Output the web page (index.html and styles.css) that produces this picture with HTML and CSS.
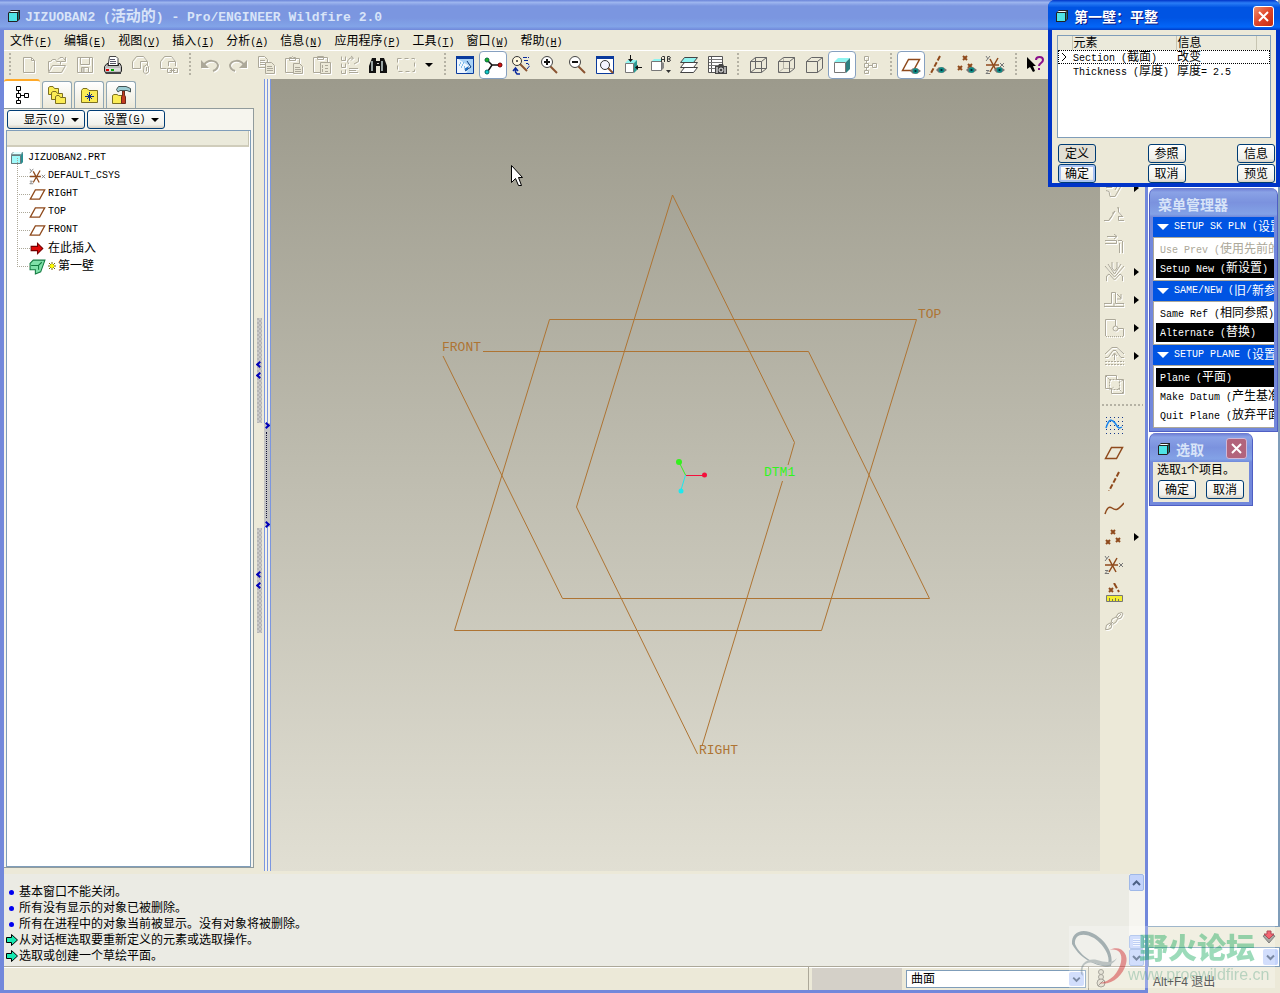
FILE: index.html
```html
<!DOCTYPE html>
<html lang="zh-CN">

<head>
  <meta charset="UTF-8">
  <meta name="viewport" content="width=device-width, initial-scale=1.0">
  <title>JIZUOBAN2 (活动的) - Pro/ENGINEER Wildfire 2.0</title>
  <link rel="stylesheet" href="styles.css">
</head>

<body>
  <!-- 图标库 -->
  <svg class="sprite" aria-hidden="true">
    <defs>
      <symbol id="i-part" viewBox="0 0 14 14">
        <path d="M1 4L4 1H13V10L10 13H1Z" fill="#222" />
        <path d="M2 4H10V12H2Z" fill="#4fe3e6" />
        <path d="M2 3L4 2H12L10 3Z" fill="#f4ffff" />
        <path d="M11 4L12 3V10L11 11Z" fill="#167a80" />
      </symbol>
      <symbol id="i-prt" viewBox="0 0 14 14">
        <path d="M1 3L3 1H13V11L11 13H1Z" fill="#7f9a9c" />
        <path d="M1.500 4.500H10.500V12.500H1.500Z" fill="#9ffafa" stroke="#687c7e" stroke-width="1" />
        <path d="M2 3L4 1H12L11 3Z" fill="#dff" />
        <path d="M11 4L13 2V11L11 13Z" fill="#2a8f92" />
      </symbol>
      <symbol id="i-new" viewBox="0 0 20 20">
        <path d="M4.500 2.500H12.500L15.500 5.500V17.500H4.500ZM12.500 2.500V5.500H15.500" class="ln" />
      </symbol>
      <symbol id="i-open" viewBox="0 0 20 20">
        <path d="M1.500 16.500V6.500H3.500L5.500 4.500H8.500L9.500 6.500H13.500V9.500M1.500 17.500L5.500 10.500H18.500L14.500 17.500ZM11 4.500L13 2.500H16L18 5M18.500 2V6.500H14" class="ln" />
      </symbol>
      <symbol id="i-save" viewBox="0 0 20 20">
        <path d="M2.500 2.500H17.500V17.500H2.500ZM5.500 2.500V9.500H14.500V2.500M6.500 17V12.500H13.500V17M8 13V17M9 13V17" class="ln" />
      </symbol>
      <symbol id="i-print" viewBox="0 0 20 20">
        <path d="M6.500 1.500H13L15 3.500V11H5Z" fill="#fff" stroke="#444" />
        <path d="M7 4.500H12M7 6.500H13M7 8.500H13" stroke="#556" />
        <path d="M1.500 11.500L4 8.500H5V10.500H15.500V8.500H17L18.500 11.500V16L17 18.500H3L1.500 16Z" fill="#bcbcbc" stroke="#222" />
        <path d="M3 13H17V16H3Z" fill="#ddd" />
        <path d="M3 14H6V16H3Z" fill="#d00" />
        <path d="M8 14H11V16H8Z" fill="#0a0" />
        <path d="M2 17H18V19H3Z" fill="#444" />
      </symbol>
      <symbol id="i-mail" viewBox="0 0 20 20">
        <path d="M1.500 13.500V6.500L5.500 1.500H12.500L16.500 6.500V10M1.500 13.500H9.500M9.500 13.500V6.500H16M13 10.500L12.500 17L14.500 19L17.500 17V11.500L15.500 9.500L13.500 11.500M15.500 12V16" class="ln" />
      </symbol>
      <symbol id="i-maillink" viewBox="0 0 20 20">
        <path d="M1.500 13.500V6.500L5.500 1.500H12.500L16.500 6.500V11M1.500 13.500H7.500M9.500 11V6.500H16M8.500 13.500H12.500V17.500H8.500ZM14.500 13.500H18.500V17.500H14.500ZM11 15.500H16" class="ln" />
      </symbol>
      <symbol id="i-undo" viewBox="0 0 20 20">
        <path d="M4 10C8 4 16 5 18 10C18 13 16 15 13 16" class="thick" />
        <path d="M1 5V13H9Z" class="fl" />
      </symbol>
      <symbol id="i-redo" viewBox="0 0 20 20">
        <path d="M16 10C12 4 4 5 2 10C2 13 4 15 7 16" class="thick" />
        <path d="M19 5V13H11Z" class="fl" />
      </symbol>
      <symbol id="i-copy" viewBox="0 0 20 20">
        <path d="M2.500 1.500H8.500L11.500 4.500V12.500H2.500ZM4 5.500H9M4 7.500H9M4 9.500H9" class="ln" />
        <path d="M9.500 7.500H15.500L18.500 10.500V18.500H9.500Z" class="ln pg" />
        <path d="M11 11.500H16M11 13.500H17M11 15.500H17" class="ln" />
      </symbol>
      <symbol id="i-paste" viewBox="0 0 20 20">
        <path d="M1.500 3.500H15.500V17.500H1.500ZM5.500 5.500V2.500H7.500L8.500 1.500L9.500 2.500H11.500V5.500Z" class="ln" />
        <path d="M9.500 8.500H15.500L18.500 11.500V18.500H9.500Z" class="ln pg" />
        <path d="M11 12.500H16M11 14.500H17M11 16.500H17" class="ln" />
      </symbol>
      <symbol id="i-pastesp" viewBox="0 0 20 20">
        <path d="M1.500 2.500H15.500V17.500H1.500ZM5.500 4.500V1.500H11.500V4.500Z" class="ln" />
        <path d="M8.500 7.500H18.500V18.500H8.500Z" class="ln pg" />
        <path d="M10.500 10V17M13 10.500H17M13 13.500H17M13 16.500H17" class="ln" stroke-dasharray="3 1" />
      </symbol>
      <symbol id="i-regen" viewBox="0 0 20 20">
        <path d="M1.500 1.500V5.500H5.500V1.500M1.500 8.500V12.500H5.500V8.500M1.500 15.500V18.500H5.500V14.500M9 13.500H18M9 15.500H16M9 17.500H18M8.500 9L7.500 6L10 3H13M11 1L13.500 3L11 5.500M18.500 2.500V6.500L14 9" class="ln" />
      </symbol>
      <symbol id="i-find" viewBox="0 0 20 20">
        <path d="M4 3H8V6H12V3H16L19 11V18H12V11H8V18H1V11Z" fill="#111" />
        <path d="M4 6V16M14 6V16" stroke="#9aa6a6" stroke-width="2" />
        <path d="M9 8.500H11" stroke="#ccc" />
      </symbol>
      <symbol id="i-box" viewBox="0 0 20 20">
        <path d="M1.500 3.500H18.500V16.500H1.500Z" class="ln" stroke-dasharray="4 3" />
      </symbol>
      <symbol id="i-repaint" viewBox="0 0 20 20">
        <path d="M1.500 1.500H18.500V18.500H1.500Z" fill="#eef6ff" stroke="#0a3a9c" />
        <path d="M1 1H19V4H1Z" fill="#0a3a9c" />
        <path d="M3 4H18V18H11L16 12Z" fill="#a9d2f6" />
        <path d="M5 8H10M4 10H9M6 12H11" stroke="#1a86d8" stroke-dasharray="1 2" />
        <path d="M12 6L16 12L10 16" fill="none" stroke="#0a3a7c" />
        <path d="M9 14L14 11L12 16Z" fill="#1a6ac0" />
      </symbol>
      <symbol id="i-spin" viewBox="0 0 20 20">
        <path d="M4 5L9 10H18M9 10L5 16" stroke="#111" stroke-width="1.500" fill="none" />
        <circle cx="4" cy="5" r="2" fill="#1bb51b" stroke="#064" />
        <circle cx="17" cy="10" r="2" fill="#d81010" stroke="#600" />
        <circle cx="4" cy="17" r="2" fill="#1cc" stroke="#066" />
      </symbol>
      <symbol id="i-orient" viewBox="0 0 20 20">
        <path d="M9 9L16 16" stroke="#8a5230" stroke-width="2" />
        <circle cx="6" cy="6" r="4.500" fill="#fff8e0" stroke="#333" />
        <path d="M5 6H7M6 5V7" stroke="#333" />
        <path d="M12 2.500H18M13 5.500H18M15 8.500H17L18.500 11L16 14" stroke="#0a2a9c" stroke-dasharray="4 1" fill="none" />
        <path d="M9 19H6L4.500 17V14M2 16L4.500 13L7 16" stroke="#0a2a9c" stroke-width="1.500" fill="none" />
      </symbol>
      <symbol id="i-zoomin" viewBox="0 0 20 20">
        <path d="M11 11L18 18" stroke="#8a5230" stroke-width="2" />
        <circle cx="8" cy="7" r="5.500" fill="#fff" stroke="#444" />
        <path d="M5 7H11M8 4V10" stroke="#111" stroke-width="2" />
      </symbol>
      <symbol id="i-zoomout" viewBox="0 0 20 20">
        <path d="M11 11L18 18" stroke="#8a5230" stroke-width="2" />
        <circle cx="8" cy="7" r="5.500" fill="#fff" stroke="#444" />
        <path d="M5 7H11" stroke="#111" stroke-width="2" />
      </symbol>
      <symbol id="i-refit" viewBox="0 0 20 20">
        <path d="M1.500 1.500H18.500V18.500H1.500Z" fill="#fff" stroke="#0a3a9c" />
        <path d="M1 1H19V4H1Z" fill="#0a3a9c" />
        <path d="M13 13L18 18" stroke="#8a5230" stroke-width="2" />
        <circle cx="10" cy="10" r="4.500" fill="#f4f4ff" stroke="#333" />
      </symbol>
      <symbol id="i-reorient" viewBox="0 0 20 20">
        <path d="M2.500 8.500H10.500V17.500H2.500Z" fill="#fff" stroke="#777" />
        <path d="M2 8L5 5H14L11 8Z" fill="#8ff4f0" />
        <path d="M11 8L14 5V15L11 18Z" fill="#2a9a94" />
        <path d="M7.500 0V5M19 12.500H14" stroke="#111" />
        <path d="M5 4H10L7.500 7ZM15 10V15L12 12.500Z" fill="#111" />
      </symbol>
      <symbol id="i-views" viewBox="0 0 20 20">
        <path d="M.5 6.500H10.500V15.500H.5Z" fill="#fff" stroke="#777" />
        <path d="M1 6L3 4H10V6Z" fill="#8ff4f0" />
        <path d="M11 7L13 8V13L11 15Z" fill="#888" />
        <path d="M10.500 7V2.500L11.500 1.500H13.500V7M10.500 4.500H13.500M16.500 1.500H18.500L19.500 3L18 4H16.500ZM16.500 4V6.500H18.500L19.500 5L18 4" stroke="#333" fill="none" />
        <path d="M15 15H20L17.500 18Z" fill="#333" />
      </symbol>
      <symbol id="i-layers" viewBox="0 0 20 20">
        <path d="M1.500 17.500L5.500 12.500H18.500L14.500 17.500Z" fill="#fff" stroke="#444" />
        <path d="M1.500 12.500L5.500 7.500H18.500L14.500 12.500Z" fill="#fff" stroke="#444" />
        <path d="M1.500 7.500L5.500 2.500H18.500L14.500 7.500Z" fill="#8ff4f0" stroke="#444" />
      </symbol>
      <symbol id="i-viewmgr" viewBox="0 0 20 20">
        <path d="M1.500 1.500H15.500V17.500H1.500ZM4.500 2V17" fill="#fff" stroke="#555" />
        <path d="M2 4.500H15M2 7.500H15M2 10.500H15M2 13.500H15" stroke="#777" />
        <path d="M8 11H11L12 9H16L17 11H20V19H8Z" fill="#444" />
        <path d="M9 12H11V18H9ZM17 12H19V18H17Z" fill="#aaa" />
        <circle cx="14" cy="15" r="2" fill="#444" stroke="#eee" />
      </symbol>
      <symbol id="i-wire" viewBox="0 0 20 20">
        <path d="M2.500 6.500H13.500V17.500H2.500ZM2.500 6.500L7.500 2.500H18.500L13.500 6.500M18.500 2.500V13.500L13.500 17.500M7.500 2.500V13.500H18.500M7.500 13.500L2.500 17.500" class="cube" />
      </symbol>
      <symbol id="i-hidden" viewBox="0 0 20 20">
        <path d="M7.500 3V13.500H18M7.500 13.500L3 17" class="cube dim" />
        <path d="M2.500 6.500H13.500V17.500H2.500ZM2.500 6.500L7.500 2.500H18.500L13.500 6.500M18.500 2.500V13.500L13.500 17.500" class="cube" />
      </symbol>
      <symbol id="i-nohidden" viewBox="0 0 20 20">
        <path d="M2.500 6.500H13.500V17.500H2.500ZM2.500 6.500L7.500 2.500H18.500L13.500 6.500M18.500 2.500V13.500L13.500 17.500" class="cube" />
      </symbol>
      <symbol id="i-shade" viewBox="0 0 20 20">
        <path d="M2 7L6 3H18L14 7Z" fill="#8ff4f0" />
        <path d="M14 7L18 3V14L14 18Z" fill="#2d8080" />
        <path d="M2.500 7.500H13.500V17.500H2.500Z" fill="#fff" stroke="#777" />
      </symbol>
      <symbol id="i-tree" viewBox="0 0 20 20">
        <path d="M4.500 1.500H8.500V5.500H4.500ZM4.500 8.500H8.500V12.500H4.500ZM4.500 15.500H8.500V18.500H4.500ZM12.500 8.500H16.500V12.500H12.500ZM6.500 5.500V8.500M6.500 12.500V15.500M8.500 10.500H12.500" class="ln" />
      </symbol>
      <symbol id="i-eye" viewBox="0 0 12 8">
        <path d="M0 4L3 1H8L12 4L8 7H3Z" fill="#777" />
        <circle cx="6" cy="4" r="3" fill="#0c8c84" />
        <path d="M5 3H7V5H5Z" fill="#023" />
      </symbol>
      <symbol id="i-plane" viewBox="0 0 20 20">
        <path d="M1.500 15.500L7.500 4.500H18.500L12.500 15.500Z" class="datum" />
      </symbol>
      <symbol id="i-axis" viewBox="0 0 20 20">
        <path d="M15 1L5 20" class="datum bold" stroke-dasharray="5 2" />
      </symbol>
      <symbol id="i-curve" viewBox="0 0 20 20">
        <path d="M1 15C3 9 5 7 8 9C12 12 14 11 20 4" class="datum" />
      </symbol>
      <symbol id="i-points" viewBox="0 0 20 20">
        <path d="M7 3L11 7M11 3L7 7M2 13L6 17M6 13L2 17M12 11L16 15M16 11L12 15" class="datum bold" />
      </symbol>
      <symbol id="i-csys" viewBox="0 0 20 20">
        <path d="M1 10H14M5 4L12 17M13 3L5 17" class="datum" />
        <path d="M1 1L3 4M5 1L1 6M15 8L19 12M19 8L15 12M1 15.500H4L1 18.500H5" stroke="#777" fill="none" />
      </symbol>
      <symbol id="i-help" viewBox="0 0 20 20">
        <path d="M1 2L10 11H7L9 16L7 17L4 12L1 14Z" fill="#000" />
        <path d="M10 5C10 1 17 1 17 5C17 8 13 8 13 11M13 13V15" stroke="#8a0f8a" stroke-width="2" fill="none" />
      </symbol>
      <symbol id="i-sketch" viewBox="0 0 20 20">
        <path d="M2 2.500H19M2 6.500H19M2 10.500H19M2 14.500H19M2 18.500H19" stroke="#16398c" stroke-dasharray="1 3" />
        <path d="M2 13C5 3 8 4 11 8C14 13 15 14 18 12" stroke="#1a86ee" fill="none" stroke-width="1.500" />
      </symbol>
      <symbol id="i-analysis" viewBox="0 0 20 20">
        <path d="M5 5L9 9M9 5L5 9M10 0L15 9" class="datum bold" stroke-dasharray="6 2" />
        <path d="M2.500 12.500H18.500V18.500H2.500Z" fill="#f3ee2c" stroke="#777" />
        <path d="M5.500 18V15M8.500 18V16M11.500 18V15M14.500 18V16" stroke="#775" />
      </symbol>
      <symbol id="i-link" viewBox="0 0 20 20">
        <path d="M1.500 18.500L2.500 14L6 12L8 13L7 17L4 18.500ZM7 12L8 8L12 6L14 7L12 11L9 13M12 6L14 2.500L18 1.500L19 3L17 7L14 8M5 15L9 11M13 7L17 3" class="ln" />
      </symbol>
      <symbol id="i-s1" viewBox="0 0 20 20">
        <path d="M2 9.500H8M2 12.500L5 13.500L6 18.500H11L18.500 5.500V1M8 9L12 1M11 12L15 5" class="ln" />
      </symbol>
      <symbol id="i-s2" viewBox="0 0 20 20">
        <path d="M0 14.500H5L11 5L8 7.500M13 2L14.500 1.500V6L19 11M14.500 10V14.500H20M14 10.500H19M5 14L8 10" class="ln" />
      </symbol>
      <symbol id="i-s3" viewBox="0 0 20 20">
        <path d="M3 2.500H13M10 0L13 2.500L10 5M1 6.500H12.500V9.500H1M15.500 9V19M18.500 7V19M14 6.500H18" class="ln" />
      </symbol>
      <symbol id="i-s4" viewBox="0 0 20 20">
        <path d="M2.500 19V14L5 12L10.500 18L16 12L18.500 14V19M1 4L10.500 15L20 4M4 2L10.500 12L17 2M8 0V6L10.500 9L13 6V0" class="ln" />
      </symbol>
      <symbol id="i-s5" viewBox="0 0 20 20">
        <path d="M0 13.500H7.500V2.500H11.500V13.500H20V16.500H0ZM10 16V13M13 4L17 8M17 4V9H13" class="ln" />
      </symbol>
      <symbol id="i-s6" viewBox="0 0 20 20">
        <path d="M1.500 18V1.500H11.500V8M14 10.500H19.500V18" class="ln" />
        <circle cx="11.500" cy="10.500" r="2.500" class="ln" />
        <path d="M2 18.500H20" class="ln" stroke-dasharray="1 1" />
      </symbol>
      <symbol id="i-s7" viewBox="0 0 20 20">
        <path d="M1 11.500H4L9 4.500H12L17 11.500H20M1 8L8 1.500H13L20 8M10.500 8V14M8 10L10.500 7L13 10" class="ln" />
        <path d="M1 15.500H20M1 18.500H20" class="ln" stroke-dasharray="2 1" />
      </symbol>
      <symbol id="i-s8" viewBox="0 0 20 20">
        <path d="M1.500 1.500H12.500V5.500H19.500V19.500H7.500V14.500H1.500Z" class="ln" />
        <path d="M2 2L7 7M19 6L14 9M7 15L10 13M19 19L14 14M5.500 5.500H15.500V15.500H5.500Z" class="ln" stroke-dasharray="2 1" />
      </symbol>
    </defs>
  </svg>

  <main class="app">
    <header class="titlebar">
      <svg class="ico14"><use href="#i-part" /></svg>
      <h1>JIZUOBAN2 (<span class="zh">活动的</span>) - Pro/ENGINEER Wildfire 2.0</h1>
    </header>

    <nav class="menubar">
      <button>文件<span class="en">(<u>F</u>)</span></button>
      <button>编辑<span class="en">(<u>E</u>)</span></button>
      <button>视图<span class="en">(<u>V</u>)</span></button>
      <button>插入<span class="en">(<u>I</u>)</span></button>
      <button>分析<span class="en">(<u>A</u>)</span></button>
      <button>信息<span class="en">(<u>N</u>)</span></button>
      <button>应用程序<span class="en">(<u>P</u>)</span></button>
      <button>工具<span class="en">(<u>T</u>)</span></button>
      <button>窗口<span class="en">(<u>W</u>)</span></button>
      <button>帮助<span class="en">(<u>H</u>)</span></button>
    </nav>

    <div class="toolbar">
      <i class="grip"></i>
      <button class="tool off" aria-label="新建"><svg><use href="#i-new" /></svg></button>
      <button class="tool off" aria-label="打开"><svg><use href="#i-open" /></svg></button>
      <button class="tool off" aria-label="保存"><svg><use href="#i-save" /></svg></button>
      <button class="tool" aria-label="打印"><svg><use href="#i-print" /></svg></button>
      <button class="tool off" aria-label="邮件"><svg><use href="#i-mail" /></svg></button>
      <button class="tool off" aria-label="邮件链接"><svg><use href="#i-maillink" /></svg></button>
      <i class="grip"></i>
      <button class="tool off" aria-label="撤消"><svg><use href="#i-undo" /></svg></button>
      <button class="tool off" aria-label="重做"><svg><use href="#i-redo" /></svg></button>
      <button class="tool off" aria-label="复制"><svg><use href="#i-copy" /></svg></button>
      <button class="tool off" aria-label="粘贴"><svg><use href="#i-paste" /></svg></button>
      <button class="tool off" aria-label="选择性粘贴"><svg><use href="#i-pastesp" /></svg></button>
      <button class="tool off" aria-label="再生"><svg><use href="#i-regen" /></svg></button>
      <button class="tool" aria-label="查找"><svg><use href="#i-find" /></svg></button>
      <button class="tool off" aria-label="框选"><svg><use href="#i-box" /></svg></button>
      <button class="drop" aria-label="选择方式"><i class="caret"></i></button>
      <i class="grip"></i>
      <button class="tool" aria-label="重画"><svg><use href="#i-repaint" /></svg></button>
      <button class="tool on" aria-label="旋转中心"><svg><use href="#i-spin" /></svg></button>
      <button class="tool" aria-label="定向模式"><svg><use href="#i-orient" /></svg></button>
      <button class="tool" aria-label="放大"><svg><use href="#i-zoomin" /></svg></button>
      <button class="tool" aria-label="缩小"><svg><use href="#i-zoomout" /></svg></button>
      <button class="tool" aria-label="重新调整"><svg><use href="#i-refit" /></svg></button>
      <button class="tool" aria-label="重定向"><svg><use href="#i-reorient" /></svg></button>
      <button class="tool" aria-label="视图列表"><svg><use href="#i-views" /></svg></button>
      <button class="tool" aria-label="层"><svg><use href="#i-layers" /></svg></button>
      <button class="tool" aria-label="视图管理器"><svg><use href="#i-viewmgr" /></svg></button>
      <i class="grip"></i>
      <button class="tool" aria-label="线框"><svg><use href="#i-wire" /></svg></button>
      <button class="tool" aria-label="隐藏线"><svg><use href="#i-hidden" /></svg></button>
      <button class="tool" aria-label="无隐藏线"><svg><use href="#i-nohidden" /></svg></button>
      <button class="tool on" aria-label="着色"><svg><use href="#i-shade" /></svg></button>
      <button class="tool off" aria-label="模型树"><svg><use href="#i-tree" /></svg></button>
      <i class="grip"></i>
      <button class="tool on" aria-label="显示平面"><svg><use href="#i-plane" /><use href="#i-eye" x="9" y="12" width="11" height="8" /></svg></button>
      <button class="tool" aria-label="显示轴"><svg><use href="#i-axis" x="-4" /><use href="#i-eye" x="7" y="11" width="11" height="8" /></svg></button>
      <button class="tool" aria-label="显示点"><svg><use href="#i-points" x="-1" y="-2" /><use href="#i-eye" x="9" y="11" width="11" height="8" /></svg></button>
      <button class="tool" aria-label="显示坐标系"><svg><use href="#i-csys" /><use href="#i-eye" x="9" y="11" width="11" height="8" /></svg></button>
      <i class="grip"></i>
      <button class="tool" aria-label="帮助"><svg><use href="#i-help" /></svg></button>
    </div>

    <div class="work">
      <aside class="navigator">
        <div class="tabs">
          <button class="tab active" aria-label="模型树"><svg><use href="#i-tree" /></svg></button>
          <button class="tab" aria-label="文件夹">
            <svg viewBox="0 0 20 20">
              <path d="M1.500 9.500V2.500L3 1.500H6L7.500 3.500H11.500V9.500Z" class="folder" />
              <path d="M4.500 14.500V7.500L6 6.500H9L10.500 8.500H15.500V14.500Z" class="folder" />
              <path d="M8.500 18.500V11.500L10 10.500H12L13.500 12.500H18.500V18.500Z" class="folder" />
            </svg>
          </button>
          <button class="tab" aria-label="收藏夹">
            <svg viewBox="0 0 20 20">
              <path d="M2.500 17.500V5.500L4 3.500H8L10 5.500H18.500V17.500Z" class="folder" />
              <path d="M6 11.500H15M10.500 7V16M8 9L13 14M13 9L8 14" stroke="#0a2a8c" />
            </svg>
          </button>
          <button class="tab" aria-label="连接">
            <svg viewBox="0 0 20 20">
              <path d="M1.500 18.500V10.500L3 9.500H6L7.500 10.500H11.500V18.500Z" class="folder" />
              <path d="M11.500 6V10L10.500 12V18.500H14.500V12L13.500 10V6Z" fill="#c43b22" stroke="#6a2a18" />
              <path d="M5.500 4.500L7.500 1.500H15L19.500 3.500V7L16 5.500H9L7 7Z" fill="#9ccdd4" stroke="#455" />
            </svg>
          </button>
        </div>
        <div class="panel">
          <div class="panel-btns">
            <button class="btn">显示<span class="en">(<u>O</u>)</span><i class="caret"></i></button>
            <button class="btn">设置<span class="en">(<u>G</u>)</span><i class="caret"></i></button>
          </div>
          <div class="treebox">
            <div class="treehead"></div>
            <ul class="tree">
              <li class="root"><svg class="ico14"><use href="#i-prt" /></svg><span class="en">JIZUOBAN2.PRT</span></li>
              <li><svg><use href="#i-csys" /></svg><span class="en">DEFAULT_CSYS</span></li>
              <li><svg><use href="#i-plane" /></svg><span class="en">RIGHT</span></li>
              <li><svg><use href="#i-plane" /></svg><span class="en">TOP</span></li>
              <li><svg><use href="#i-plane" /></svg><span class="en">FRONT</span></li>
              <li>
                <svg viewBox="0 0 16 16"><path d="M2 6H8V3L13 8L8 13V10H2Z" fill="#e00808" stroke="#700" stroke-width="1" /></svg>
                <span>在此插入</span>
              </li>
              <li>
                <svg viewBox="0 0 16 16"><path d="M1 5L4 2H15L11 13L6 15V11H1Z" fill="#7fe0a8" stroke="#127a40" /><path d="M2 7H9V11M9 7L12 4" stroke="#127a40" fill="none" /></svg>
                <svg class="spark" viewBox="0 0 8 8"><path d="M0 4H8M4 0V8M1 1L7 7M7 1L1 7" stroke="#776b00" /><circle cx="4" cy="4" r="2" fill="#ff0" /></svg>
                <span>第一壁</span>
              </li>
            </ul>
          </div>
        </div>
      </aside>

      <div class="splitter">
        <div class="hatch-col">
          <i class="hatch"><b></b><b></b></i>
          <i class="hatch"><b></b><b></b></i>
        </div>
        <div class="rail">
          <i class="handle"><b></b><em></em><b></b></i>
        </div>
      </div>

      <section class="viewport">
        <svg class="scene" width="829" height="792" viewBox="271 79 829 792">
          <g class="planes">
            <path d="M483 351.500H808.500L929.500 598.500H562.500L443 356" />
            <path d="M549.500 319.500H916.500L821.500 630.500H454.500Z" />
            <path d="M672.500 195L794.500 442.500L788 465M782.500 481L702 746M697.500 754L576.500 507L672.500 195" />
          </g>
          <g class="labels">
            <text x="442" y="351">FRONT</text>
            <text x="918" y="318">TOP</text>
            <text x="699" y="754">RIGHT</text>
            <text x="764" y="476" class="active">DTM1</text>
          </g>
          <path d="M686 475.500H704" stroke="#f5103c" />
          <path d="M685.500 475L679 462" stroke="#35f01e" />
          <path d="M685.500 475L681 490" stroke="#1ee8ee" />
          <circle cx="704.500" cy="475" r="2.500" fill="#f5103c" />
          <circle cx="679" cy="462" r="3" fill="#35f01e" />
          <circle cx="681" cy="491" r="2.500" fill="#1ee8ee" />
          <path d="M511.500 165.500V182.500L515.500 178.500L518.500 185.500H521.500L518.500 177.500H522.500Z" fill="#fff" stroke="#000" />
        </svg>
      </section>

      <div class="sidebar">
        <button class="tool off" aria-label="平整壁"><svg><use href="#i-s1" /></svg><i class="fly"></i></button>
        <button class="tool off" aria-label="法兰壁"><svg><use href="#i-s2" /></svg></button>
        <button class="tool off" aria-label="延伸壁"><svg><use href="#i-s3" /></svg></button>
        <button class="tool off" aria-label="折弯"><svg><use href="#i-s4" /></svg><i class="fly"></i></button>
        <button class="tool off" aria-label="展平"><svg><use href="#i-s5" /></svg><i class="fly"></i></button>
        <button class="tool off" aria-label="止裂槽"><svg><use href="#i-s6" /></svg><i class="fly"></i></button>
        <button class="tool off" aria-label="成形"><svg><use href="#i-s7" /></svg><i class="fly"></i></button>
        <button class="tool off" aria-label="平整形态"><svg><use href="#i-s8" /></svg></button>
        <i class="divider"></i>
        <button class="tool" aria-label="草绘"><svg><use href="#i-sketch" /></svg></button>
        <button class="tool" aria-label="基准平面"><svg><use href="#i-plane" /></svg></button>
        <button class="tool" aria-label="基准轴"><svg><use href="#i-axis" /></svg></button>
        <button class="tool" aria-label="基准曲线"><svg><use href="#i-curve" /></svg></button>
        <button class="tool" aria-label="基准点"><svg><use href="#i-points" /></svg><i class="fly"></i></button>
        <button class="tool" aria-label="坐标系"><svg><use href="#i-csys" /></svg></button>
        <button class="tool" aria-label="分析特征"><svg><use href="#i-analysis" /></svg></button>
        <button class="tool off" aria-label="参照"><svg><use href="#i-link" /></svg></button>
      </div>
    </div>

    <section class="messages">
      <ul>
        <li class="info">基本窗口不能关闭。</li>
        <li class="info">所有没有显示的对象已被删除。</li>
        <li class="info">所有在进程中的对象当前被显示。没有对象将被删除。</li>
        <li><svg viewBox="0 0 12 12"><path d="M.5 3.500H5.500V.5L11.500 6L5.500 11.500V8.500H.5Z" class="prompt" /></svg>从对话框选取要重新定义的元素或选取操作。</li>
        <li><svg viewBox="0 0 12 12"><path d="M.5 3.500H5.500V.5L11.500 6L5.500 11.500V8.500H.5Z" class="prompt" /></svg>选取或创建一个草绘平面。</li>
      </ul>
      <div class="scroll">
        <button class="sbtn" aria-label="向上"><svg viewBox="0 0 9 6"><path d="M1 5L4.500 1.500L8 5" /></svg></button>
        <div class="thumb"></div>
        <button class="sbtn" aria-label="向下"><svg viewBox="0 0 9 6"><path d="M1 1L4.500 4.500L8 1" /></svg></button>
      </div>
    </section>

    <footer class="status">
      <div class="cell-tip"></div>
      <div class="cell-grey"></div>
      <div class="combo">
        <select aria-label="过滤器">
          <option>曲面</option>
        </select>
        <svg class="arrow" viewBox="0 0 15 15"><path d="M4 6L7.500 9.500L11 6" /></svg>
      </div>
      <div class="cell-light">
        <svg viewBox="0 0 12 20"><circle cx="6" cy="4" r="2.500" /><circle cx="6" cy="9" r="2.500" /><circle cx="6" cy="15" r="4" /><path d="M3 18L9 12" /></svg>
      </div>
    </footer>
  </main>

  <aside class="backdrop">
    <div class="page"></div>
    <div class="strip">
      <svg viewBox="0 0 14 14"><path d="M1 6L7 13L13 6L10 5H4Z" fill="#8a8a84" stroke="#555" /><path d="M5 1H9V4H12L7 9L2 4H5Z" fill="#f03040" stroke="#901020" /></svg>
    </div>
    <div class="combo">
      <select aria-label="命令"></select>
      <svg class="arrow" viewBox="0 0 15 15"><path d="M4 6L7.500 9.500L11 6" /></svg>
    </div>
    <p class="hint">Alt+F4 退出</p>
  </aside>

  <section class="win win-menu inactive">
    <header>
      <h2>菜单管理器</h2>
    </header>
    <div class="win-body">
      <h3><i></i><span class="en">SETUP SK PLN (</span>设置</h3>
      <ul>
        <li class="dim"><span class="en">Use Prev (</span>使用先前的</li>
        <li class="sel"><span class="en">Setup New (</span>新设置<span class="en">)</span></li>
      </ul>
      <h3><i></i><span class="en">SAME/NEW (</span>旧<span class="en">/</span>新参</h3>
      <ul>
        <li><span class="en">Same Ref (</span>相同参照<span class="en">)</span></li>
        <li class="sel"><span class="en">Alternate (</span>替换<span class="en">)</span></li>
      </ul>
      <h3><i></i><span class="en">SETUP PLANE (</span>设置</h3>
      <ul>
        <li class="sel"><span class="en">Plane (</span>平面<span class="en">)</span></li>
        <li><span class="en">Make Datum (</span>产生基准</li>
        <li><span class="en">Quit Plane (</span>放弃平面</li>
      </ul>
    </div>
  </section>

  <section class="win win-select inactive">
    <header>
      <svg class="ico14"><use href="#i-part" /></svg>
      <h2>选取</h2>
      <button class="close" aria-label="关闭"><svg viewBox="0 0 11 11"><path d="M1 1L10 10M10 1L1 10" /></svg></button>
    </header>
    <div class="win-body">
      <p>选取<span class="en">1</span>个项目。</p>
      <div class="row">
        <button class="btn">确定</button>
        <button class="btn">取消</button>
      </div>
    </div>
  </section>

  <section class="win win-wall">
    <header>
      <svg class="ico14"><use href="#i-part" /></svg>
      <h2>第一壁：平整</h2>
      <button class="close" aria-label="关闭"><svg viewBox="0 0 11 11"><path d="M1 1L10 10M10 1L1 10" /></svg></button>
    </header>
    <div class="win-body">
      <div class="listbox">
        <table>
          <thead>
            <tr><th class="mark"></th><th class="name">元素</th><th>信息</th><th class="end"></th></tr>
          </thead>
          <tbody>
            <tr class="current"><td><svg viewBox="0 0 6 10"><path d="M1 1L5 5L1 9" /></svg></td><td><span class="en">Section (</span>截面<span class="en">)</span></td><td colspan="2">改变</td></tr>
            <tr><td></td><td><span class="en">Thickness (</span>厚度<span class="en">)</span></td><td colspan="2">厚度<span class="en">= 2.5</span></td></tr>
          </tbody>
        </table>
      </div>
      <div class="actions">
        <button class="btn pressed">定义</button>
        <button class="btn">参照</button>
        <button class="btn">信息</button>
        <button class="btn default">确定</button>
        <button class="btn">取消</button>
        <button class="btn">预览</button>
      </div>
    </div>
  </section>

  <div class="watermark">
    <svg viewBox="0 0 62 62">
      <path fill-rule="evenodd" d="M3 18C2 6 14 1 27 9C38 16 45 29 42 40C36 42 14 38 3 18ZM6 18C12 33 34 42 39 38C42 30 34 18 25 12C15 6 5 8 6 18Z" fill="#5d7480" />
      <path d="M40 24C52 18 60 28 57 38C54 50 42 60 30 57C42 56 50 46 52 36C54 26 48 22 40 24Z" fill="#d83a40" />
      <path d="M12 48C10 38 18 32 28 34C36 36 42 38 48 32C42 42 34 40 26 37C16 35 12 40 14 50Z" fill="#8c9aa0" />
    </svg>
    <div>
      <strong>野火论坛</strong>
      <span>www.proewildfire.cn</span>
    </div>
  </div>
</body>

</html>
```

FILE: styles.css
```css
:root {
  --face: #ece9d8;
  --edge: #7288db;
  --line: #7f9db9;
  --shade: #aca899;
  --blue: #0054e3;
  --datum: #8f4a1c;
}

* {
  box-sizing: border-box;
}

body {
  margin: 0;
  height: 100vh;
  overflow: hidden;
  display: flex;
  background: var(--face);
  color: #000;
  font: 12px/16px "Liberation Sans", "Noto Sans CJK SC", sans-serif;
}

h1,
h2,
h3,
p,
ul {
  margin: 0;
  padding: 0;
  font-size: 12px;
  font-weight: normal;
}

ul {
  list-style: none;
}

button,
select {
  font: inherit;
  color: inherit;
  margin: 0;
  padding: 0;
  border: none;
  background: none;
}

svg {
  flex: none;
}

.sprite {
  position: absolute;
  width: 0;
  height: 0;
}

.en {
  font-family: "Liberation Mono", monospace;
  font-size: 10px;
  line-height: 10px;
  white-space: pre;
}

.ico14 {
  width: 14px;
  height: 14px;
}

/* icon strokes */
.ln {
  fill: none;
  stroke: currentColor;
}

.pg {
  fill: var(--face);
}

.fl {
  fill: currentColor;
}

.thick {
  fill: none;
  stroke: currentColor;
  stroke-width: 2;
}

.cube {
  fill: none;
  stroke: #666;
}

.cube.dim {
  stroke: #b5b2a6;
}

.datum {
  fill: none;
  stroke: var(--datum);
  stroke-width: 1.5;
}

.datum.bold {
  stroke-width: 2;
}

.folder {
  fill: #fbec54;
  stroke: #7d7020;
}

.caret {
  border: 4px solid transparent;
  border-top-color: #000;
  border-bottom: none;
}

/* main window */
.app {
  flex: 1;
  min-width: 0;
  display: flex;
  flex-direction: column;
  border: solid var(--edge);
  border-width: 0 3px 3px 4px;
}

.titlebar {
  height: 30px;
  margin: 0 -3px 0 -4px;
  padding: 2px 0 0 7px;
  display: flex;
  align-items: center;
  gap: 4px;
  background: linear-gradient(#6a84d8, #9db5ee 8%, #7b96e0 20%, #7b96e0 60%, #82a4e8 88%, #7088da);
}

.titlebar h1 {
  color: #d8e4f8;
  font: bold 13px/20px "Liberation Mono", monospace;
  white-space: nowrap;
}

.zh {
  font: bold 15px/20px "Noto Sans CJK SC", sans-serif;
}

.menubar {
  display: flex;
  gap: 12px;
  height: 21px;
  padding: 2px 0 0 6px;
  border-bottom: 1px solid #fff;
}

.toolbar {
  display: flex;
  height: 28px;
}

.grip {
  flex: none;
  width: 13px;
  margin: 2px 0;
  background: linear-gradient(#b5b2a4 2px, transparent 2px) center top / 2px 4px repeat-y;
}

.grip:first-child {
  width: 11px;
}

.tool {
  flex: none;
  width: 28px;
  height: 28px;
  display: flex;
  align-items: center;
  justify-content: center;
}

.tool svg {
  width: 20px;
  height: 20px;
}

.tool.off {
  color: var(--shade);
}

.tool.off svg {
  filter: drop-shadow(1px 1px 0 #fff);
}

.tool.on {
  background: #fff;
  border: 1px solid #86a0c0;
  border-radius: 4px;
}

.drop {
  width: 18px;
  display: flex;
  align-items: center;
  justify-content: center;
}

.work {
  flex: 1;
  min-height: 0;
  display: flex;
}

/* navigator */
.navigator {
  width: 250px;
  display: flex;
  flex-direction: column;
  padding-bottom: 3px;
}

.tabs {
  display: flex;
  align-items: flex-end;
  gap: 2px;
  height: 29px;
}

.tab {
  width: 30px;
  height: 27px;
  display: flex;
  align-items: center;
  justify-content: center;
  border: 1px solid #91a7b4;
  border-bottom: none;
  border-radius: 3px 3px 0 0;
  background: linear-gradient(#fff, #ece9d8);
}

.tab svg {
  width: 20px;
  height: 20px;
}

.tab.active {
  width: 36px;
  height: 29px;
  border: none;
  border-top: 2px solid #ffa928;
  background: #fff;
}

.panel {
  flex: 1;
  display: flex;
  flex-direction: column;
  padding: 1px 2px 0 2px;
  border: 1px solid #919b9c;
  border-left: none;
  background: #f6f5ee;
}

.panel-btns {
  display: flex;
  gap: 2px;
  padding: 0 1px;
  margin-bottom: 1px;
}

.btn {
  height: 19px;
  border: 1px solid #003c74;
  border-radius: 3px;
  background: linear-gradient(#fff, #f0f0ea 80%, #d8d0c4);
  line-height: 16px;
  white-space: nowrap;
}

.panel-btns .btn {
  width: 78px;
  padding-left: 10px;
  display: flex;
  align-items: center;
  justify-content: center;
}

.btn .caret {
  margin-left: 5px;
}

.treebox {
  flex: 1;
  border: 1px solid var(--line);
  background: #fff;
}

.treehead {
  height: 16px;
  margin-right: 1px;
  background: #ebeadb;
  border-right: 1px solid #c7c5b2;
  border-bottom: 2px solid #d0cdbb;
}

.tree {
  padding: 2px 0 0 3px;
}

.tree li {
  position: relative;
  height: 18px;
  padding-left: 19px;
  display: flex;
  align-items: center;
  gap: 2px;
}

.tree li.root {
  padding-left: 0;
  gap: 4px;
}

.tree li:not(.root) svg {
  width: 17px;
  height: 17px;
}

.tree li:not(.root) .spark {
  width: 8px;
  height: 8px;
}

.tree li:not(.root)::before {
  content: "";
  position: absolute;
  left: 7px;
  top: -9px;
  width: 12px;
  height: 18px;
  border: dotted #aca899;
  border-width: 0 0 1px 1px;
}

/* splitter */
.splitter {
  width: 17px;
  padding-left: 3px;
  display: flex;
  gap: 2px;
}

.hatch-col {
  width: 5px;
  display: flex;
  flex-direction: column;
  justify-content: center;
  gap: 105px;
}

.hatch {
  height: 105px;
  display: flex;
  flex-direction: column;
  align-items: center;
  justify-content: center;
  gap: 6px;
  background: repeating-conic-gradient(#c9c9c9 0 25%, #b5b5b5 0 50%) 0 0 / 4px 4px;
}

.hatch b,
.handle b {
  width: 5px;
  height: 5px;
  border: solid #0000b8;
  border-width: 0 0 2px 2px;
  transform: rotate(45deg);
}

.rail {
  width: 7px;
  display: flex;
  align-items: center;
  background: linear-gradient(90deg, #7b96e0 1px, #f3f1e8 1px 3px, #7b96e0 3px 4px, #f3f1e8 4px 6px, #7b96e0 6px);
}

.handle {
  width: 6px;
  height: 104px;
  display: flex;
  flex-direction: column;
  justify-content: space-between;
  background: #c4c4c4;
}

.handle b {
  border-width: 2px 2px 0 0;
}

.handle em {
  flex: 1;
  width: 0;
  margin: 4px 0 4px 2px;
  border-left: 1px dotted #113;
}

/* graphics area */
.viewport {
  flex: 1;
  min-width: 0;
  background: linear-gradient(#9c9a8c, #e1dfd3);
  overflow: hidden;
}

.scene {
  display: block;
}

.planes {
  fill: none;
  stroke: #ae7433;
}

.labels {
  fill: #ae7433;
  font: 13px "Liberation Mono", monospace;
}

.labels .active {
  fill: #32f51e;
}

.sidebar {
  width: 45px;
  padding-top: 95px;
}

.sidebar .tool {
  width: 45px;
  padding-left: 4px;
  justify-content: flex-start;
}

.fly {
  margin-left: 10px;
  border: 4px solid transparent;
  border-left: 5px solid #000;
  border-right: none;
}

.divider {
  display: block;
  height: 13px;
  margin: 0 2px;
  background: linear-gradient(90deg, #b5b2a4 2px, transparent 2px) left center / 4px 2px repeat-x;
}

/* message log */
.messages {
  height: 95px;
  display: flex;
  justify-content: space-between;
  border-top: 3px solid var(--face);
  background: #ebebe4;
}

.messages ul {
  padding: 10px 0 0 2px;
}

.messages li {
  display: flex;
  align-items: center;
  gap: 1px;
  height: 16px;
}

.messages li svg {
  width: 12px;
  height: 12px;
}

.info::before {
  content: "";
  width: 5px;
  height: 5px;
  margin: 0 4px 0 3px;
  border-radius: 50%;
  background: #0000f0;
}

.prompt {
  fill: #16e8b0;
  stroke: #000;
}

.scroll {
  width: 16px;
  display: flex;
  flex-direction: column;
  background: #f6f5f0;
}

.sbtn {
  width: 15px;
  height: 17px;
  display: flex;
  align-items: center;
  justify-content: center;
  border: 1px solid #9fb8e8;
  border-radius: 2px;
  background: #c3d3fb;
}

.sbtn svg {
  width: 9px;
  height: 6px;
}

.sbtn path,
.arrow path {
  fill: none;
  stroke: #4d6185;
  stroke-width: 2;
}

.thumb {
  width: 15px;
  height: 14px;
  margin-top: auto;
  border: 1px solid #9fb8e8;
  border-radius: 2px;
  background: repeating-linear-gradient(#eef4fe 0 1px, #a8bff0 1px 2px) center / 7px 7px no-repeat #c3d3fb;
}

.status {
  height: 24px;
  display: flex;
  border-top: 1px solid var(--shade);
  box-shadow: inset 0 1px #fff;
}

.cell-tip {
  flex: 1;
  margin-right: 3px;
  border-right: 1px solid var(--shade);
}

.cell-grey {
  width: 90px;
  margin: 1px 4px 0 0;
  background: #d4d0c8;
}

.combo {
  position: relative;
  height: 18px;
  border: 1px solid var(--line);
  background: #fff;
}

.combo select {
  display: block;
  appearance: none;
  width: 100%;
  height: 16px;
  padding-left: 4px;
}

.arrow {
  position: absolute;
  right: 1px;
  top: 1px;
  bottom: 1px;
  width: 15px;
  height: calc(100% - 2px);
  border-radius: 2px;
  background: #c3d3fb;
}

.status .combo {
  width: 180px;
  margin-top: 3px;
}

.cell-light {
  width: 57px;
  margin-left: 2px;
  padding: 1px 0 0 6px;
  border-left: 1px solid var(--shade);
}

.cell-light svg {
  width: 12px;
  height: 20px;
  fill: #dddacb;
  stroke: #8a877b;
}

/* window behind, on the right */
.backdrop {
  width: 132px;
  display: flex;
  flex-direction: column;
}

.backdrop .page {
  flex: 1;
  border: solid var(--line);
  border-width: 0 2px 1px 0;
  background: #fff;
}

.strip {
  height: 20px;
  display: flex;
  align-items: center;
  justify-content: flex-end;
  padding-right: 4px;
}

.strip svg {
  width: 14px;
  height: 14px;
}

.backdrop .combo {
  height: 20px;
}

.backdrop .combo select {
  height: 18px;
}

.hint {
  height: 26px;
  padding: 7px 0 0 5px;
  color: #222;
}

/* floating windows */
.win {
  position: absolute;
  display: flex;
  flex-direction: column;
  padding: 0 4px 4px;
  border-radius: 7px 7px 0 0;
  background: #0034c8;
}

.win header {
  height: 30px;
  margin: 0 -4px;
  padding: 2px 6px 0 7px;
  display: flex;
  align-items: center;
  gap: 5px;
  border-radius: 7px 7px 0 0;
  background: linear-gradient(#0034c8, #2a7df6 10%, #0054e3 25%, #0054e3 60%, #0366f8 90%, #003cc8);
}

.win h2 {
  flex: 1;
  color: #fff;
  font: bold 14px/20px "Noto Sans CJK SC", sans-serif;
  white-space: nowrap;
}

.win:not(.inactive) h2 {
  text-shadow: 1px 1px #0a1883;
}

.win-body {
  flex: 1;
  background: var(--face);
}

.inactive {
  background: var(--edge);
  border: 1px solid #4f5fc4;
  border-top: none;
  padding: 0 3px 3px;
}

.inactive header {
  margin: 0 -3px;
  background: linear-gradient(#6a78d0, #8aa2e6 14%, #7b92de 50%, #83a2e6 90%, #7088da);
}

.inactive h2 {
  color: #d8e4f8;
}

.close {
  width: 21px;
  height: 21px;
  display: flex;
  align-items: center;
  justify-content: center;
  border: 1px solid #fff;
  border-radius: 3px;
  background: linear-gradient(135deg, #f0906c, #e0452a 50%, #c42c10);
}

.close svg {
  width: 11px;
  height: 11px;
  stroke: #fff;
  stroke-width: 2;
}

.inactive .close {
  border-color: #d0b8d8;
  background: #b2647c;
}

.win .btn {
  width: 38px;
}

.win-wall {
  top: 0;
  right: 0;
  width: 232px;
  height: 187px;
}

.win-wall .win-body {
  padding: 5px 0 0 5px;
}

.listbox {
  height: 103px;
  margin-right: 5px;
  border: 1px solid var(--line);
  background: #fff;
}

.listbox table {
  width: 100%;
  table-layout: fixed;
  border-collapse: collapse;
}

.listbox th,
.listbox td {
  height: 14px;
  padding: 0 0 0 1px;
  font-weight: normal;
  line-height: 14px;
  text-align: left;
  white-space: nowrap;
}

.listbox thead tr {
  background: #ebeadb;
}

.listbox th + th {
  border-left: 1px solid #c7c5b2;
}

.mark {
  width: 14px;
}

.name {
  width: 104px;
}

.end {
  width: 14px;
}

.current {
  outline: 1px dotted #000;
  outline-offset: -1px;
}

.listbox td svg {
  display: block;
  width: 6px;
  height: 10px;
  margin-left: 2px;
  fill: none;
  stroke: #000;
}

.actions {
  display: grid;
  grid-template-columns: repeat(3, 38px);
  justify-content: space-between;
  gap: 1px 0;
  padding: 6px 1px 0;
}

.btn.pressed {
  background: #e2dfd4;
}

.btn.default {
  box-shadow: inset 0 0 0 2px #a9c2f2;
}

.win-menu {
  top: 188px;
  right: 2px;
  width: 129px;
}

.win-menu header {
  height: 29px;
}

.win-menu h2 {
  padding-left: 1px;
}

.win-menu .win-body {
  overflow: hidden;
  background: #fff;
  white-space: nowrap;
}

.win-menu h3 {
  height: 20px;
  padding-left: 4px;
  display: flex;
  align-items: center;
  background: var(--blue);
  color: #fff;
}

.win-menu h3 i {
  flex: none;
  margin-right: 5px;
  border: 6px solid transparent;
  border-top-color: #fff;
  border-bottom: none;
}

.win-menu ul {
  padding: 2px 0 2px 2px;
  border: 1px solid var(--shade);
  border-right: none;
}

.win-menu li {
  height: 19px;
  padding-left: 4px;
  line-height: 19px;
}

.win-menu .dim {
  color: var(--shade);
}

.win-menu .sel {
  background: #000;
  color: #fff;
}

.win-select {
  top: 433px;
  right: 27px;
  width: 104px;
}

.win-select header {
  height: 29px;
  padding-right: 5px;
}

.win-select .win-body {
  padding: 0 4px 3px;
}

.win-select .row {
  display: flex;
  gap: 10px;
  padding: 2px 1px 0;
}

/* watermark */
.watermark {
  position: absolute;
  right: 5px;
  bottom: 5px;
  width: 206px;
  height: 62px;
  display: flex;
  opacity: 0.5;
  background: rgba(255, 255, 255, 0.5);
  color: #3cb878;
}

.watermark svg {
  width: 62px;
  height: 62px;
}

.watermark strong {
  display: block;
  padding-left: 8px;
  font: 900 29px/40px "Noto Sans CJK SC", sans-serif;
}

.watermark span {
  display: block;
  margin-left: -3px;
  color: #86bda8;
  font: 16px/18px "Liberation Sans", sans-serif;
}
```
